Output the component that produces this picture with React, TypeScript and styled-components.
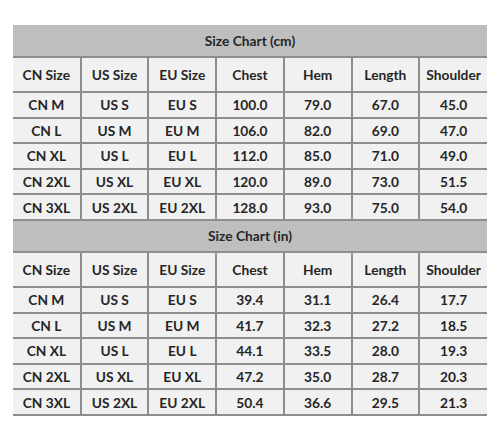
import styled, { createGlobalStyle } from 'styled-components';

const GlobalStyle = createGlobalStyle`
  html, body {
    margin: 0;
    padding: 0;
    background: #ffffff;
  }
`;

const headers = ['CN Size', 'US Size', 'EU Size', 'Chest', 'Hem', 'Length', 'Shoulder'];

const cmRows = [
  ['CN M', 'US S', 'EU S', '100.0', '79.0', '67.0', '45.0'],
  ['CN L', 'US M', 'EU M', '106.0', '82.0', '69.0', '47.0'],
  ['CN XL', 'US L', 'EU L', '112.0', '85.0', '71.0', '49.0'],
  ['CN 2XL', 'US XL', 'EU XL', '120.0', '89.0', '73.0', '51.5'],
  ['CN 3XL', 'US 2XL', 'EU 2XL', '128.0', '93.0', '75.0', '54.0'],
];

const inRows = [
  ['CN M', 'US S', 'EU S', '39.4', '31.1', '26.4', '17.7'],
  ['CN L', 'US M', 'EU M', '41.7', '32.3', '27.2', '18.5'],
  ['CN XL', 'US L', 'EU L', '44.1', '33.5', '28.0', '19.3'],
  ['CN 2XL', 'US XL', 'EU XL', '47.2', '35.0', '28.7', '20.3'],
  ['CN 3XL', 'US 2XL', 'EU 2XL', '50.4', '36.6', '29.5', '21.3'],
];

const App = () => {
  return (
    <Page>
      <GlobalStyle />
      <Chart>
        <tbody>
          <ChartBlock title="Size Chart (cm)" rows={cmRows} />
          <ChartBlock title="Size Chart (in)" rows={inRows} />
        </tbody>
      </Chart>
    </Page>
  );
};

export default App;

const ChartBlock = ({ title, rows }: { title: string; rows: string[][] }) => (
  <>
    <TitleRow>
      <TitleCell colSpan={7}>{title}</TitleCell>
    </TitleRow>
    <HeadRow>
      {headers.map((h) => (
        <Cell key={h}>{h}</Cell>
      ))}
    </HeadRow>
    {rows.map((row) => (
      <DataRow key={row[0]}>
        {row.map((v, i) => (
          <Cell key={i}>{v}</Cell>
        ))}
      </DataRow>
    ))}
  </>
);

const Page = styled.div`
  width: 500px;
  height: 430px;
  padding: 25px 13px 0 13px;
  box-sizing: border-box;
  background: #ffffff;
`;

const Chart = styled.table`
  width: 474px;
  border-collapse: collapse;
  table-layout: fixed;
  font-family: Lato, 'Liberation Sans', sans-serif;
  font-size: 13.75px;
  font-weight: 700;
  color: #262626;
`;

const TitleRow = styled.tr`
  height: 32px;
`;

const TitleCell = styled.td`
  background: #bebebe;
  text-align: center;
  padding: 0;
  border-bottom: 2px solid #8e8e8e;
`;

const HeadRow = styled.tr`
  height: 35px;
`;

const DataRow = styled.tr`
  height: 25.6px;
`;

const Cell = styled.td`
  background: #f1f1f1;
  text-align: center;
  padding: 0;
  border: 2px solid #8e8e8e;
  border-top: none;
  &:first-child {
    border-left: none;
  }
  &:last-child {
    border-right: none;
  }
`;
